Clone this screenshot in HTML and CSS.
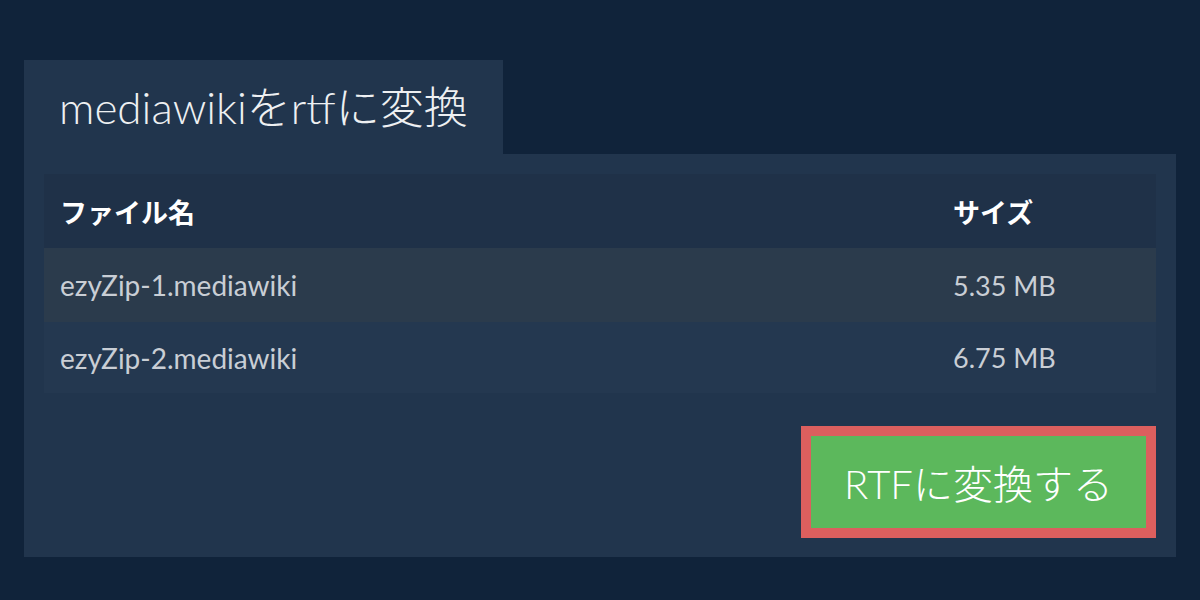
FILE: index.html
```html
<!DOCTYPE html>
<html lang="ja">
<head>
<meta charset="utf-8">
<link rel="stylesheet" href="styles.css">
</head>
<body>
<main class="page">
  <div class="tab"><h1 class="title">mediawikiをrtfに変換</h1></div>
  <section class="panel">
    <table class="files">
      <thead>
        <tr><th class="name">ファイル名</th><th class="size">サイズ</th></tr>
      </thead>
      <tbody>
        <tr class="odd"><td class="name">ezyZip-1.mediawiki</td><td class="size">5.35 MB</td></tr>
        <tr class="even"><td class="name">ezyZip-2.mediawiki</td><td class="size">6.75 MB</td></tr>
      </tbody>
    </table>
    <div class="actions">
      <button class="convert">RTFに変換する</button>
    </div>
  </section>
</main>
</body>
</html>
```

FILE: styles.css
```css
html, body {
  margin: 0;
  padding: 0;
}
body {
  width: 1200px;
  height: 600px;
  background: #10233a;
  font-family: "Lato", "Noto Sans CJK JP", sans-serif;
  overflow: hidden;
}
.page {
  padding: 60px 24px 0 24px;
}
.tab {
  display: inline-block;
  width: 479px;
  height: 94px;
  background: #21354d;
  box-sizing: border-box;
  padding-left: 35px;
}
.title {
  margin: 0;
  font-size: 44px;
  font-weight: 300;
  line-height: 94px;
  color: #eef0f2;
  white-space: nowrap;
}
.panel {
  background: #21354d;
  padding: 20px 20px 19px 20px;
}
.files {
  width: 100%;
  border-collapse: collapse;
}
.files th {
  background: #1f3148;
  color: #ffffff;
  font-weight: 700;
  font-size: 27px;
  text-align: left;
  height: 74px;
  padding: 0 16px;
}
.files td {
  font-size: 27px;
  color: #c9ced5;
  padding: 0 16px;
}
.files td.name {
  font-size: 28px;
}
.files th.size, .files td.size {
  width: 187px;
  padding-left: 0;
}
.odd td {
  background: #2b3b4c;
  height: 74px;
}
.even td {
  background: #243850;
  height: 71px;
}
.actions {
  display: flex;
  justify-content: flex-end;
  margin-top: 33px;
}
.convert {
  width: 355px;
  height: 112px;
  border: 10px solid #dc5f5e;
  background: #5cb85c;
  color: #ffffff;
  font-family: "Lato", "Noto Sans CJK JP", sans-serif;
  font-size: 40px;
  font-weight: 300;
  padding: 0;
  cursor: pointer;
}
```
